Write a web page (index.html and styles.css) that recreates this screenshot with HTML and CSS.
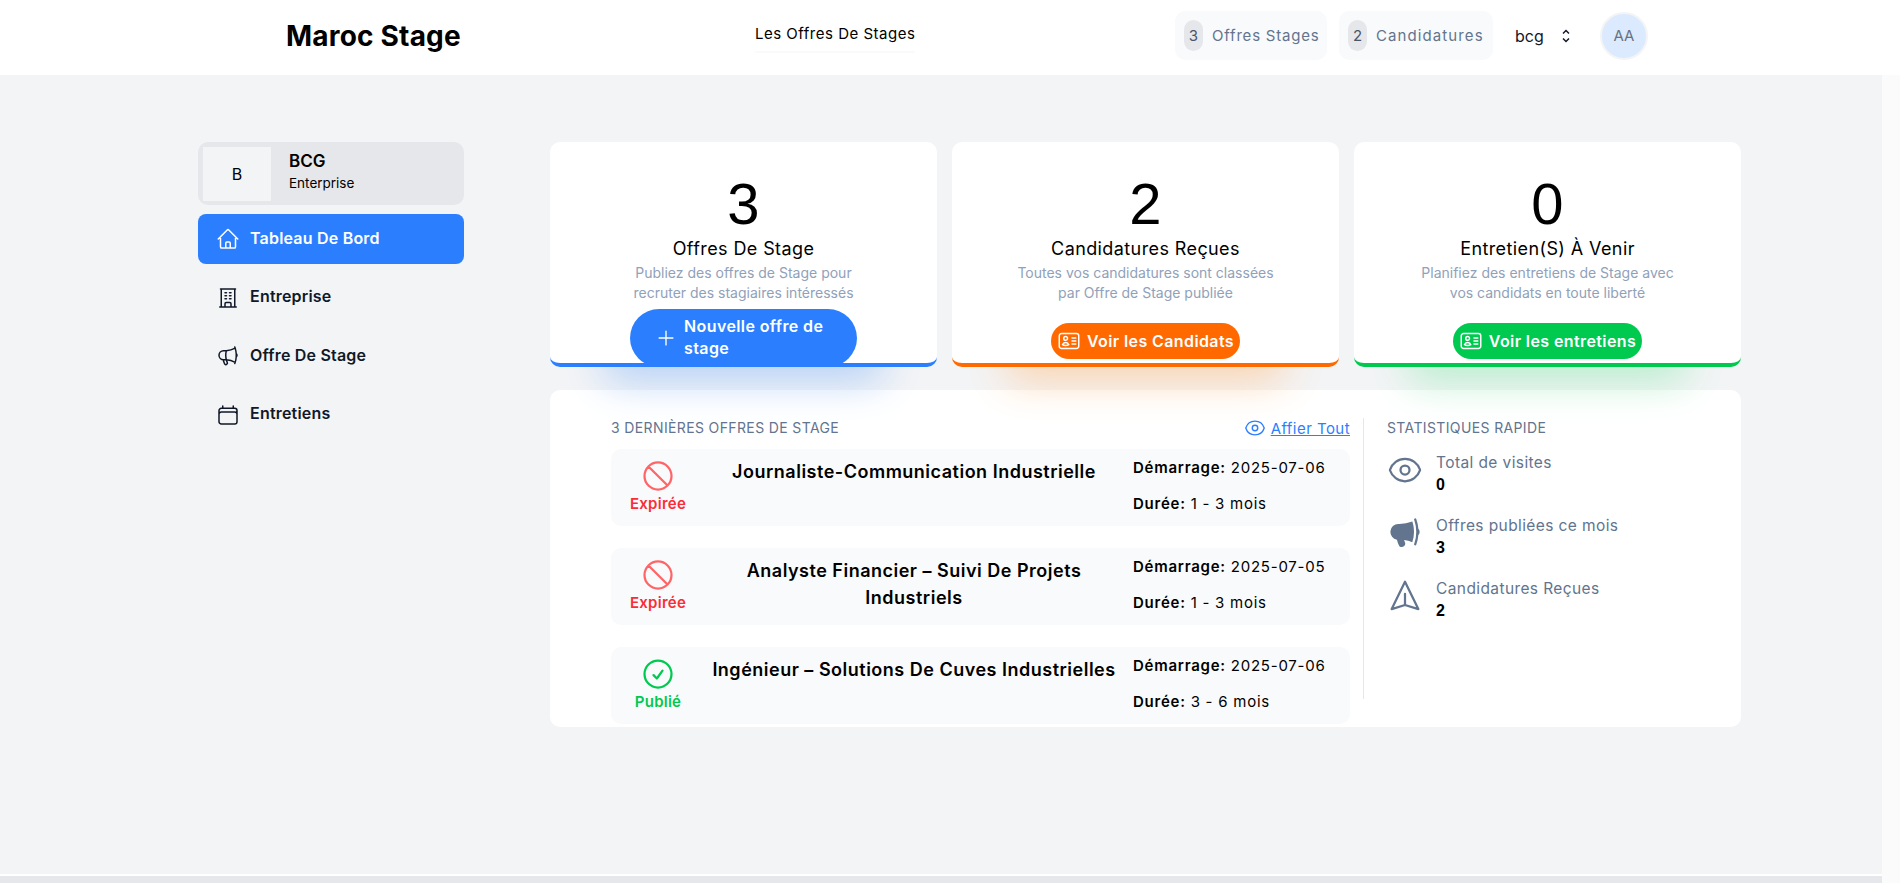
FILE: index.html
```html
<!DOCTYPE html>
<html lang="fr">

<head>
    <title>Maroc Stage</title>
    <meta charset="utf-8">
    <meta name="viewport" content="width=device-width, initial-scale=1">
    <link rel="stylesheet" href="styles.css">
</head>

<body>
    <header class="topbar">
        <div class="logo">Maroc Stage</div>
        <a class="nav_link">Les Offres De Stages</a>
        <div class="top_right">
            <div class="counter"><span class="badge">3</span>Offres Stages</div>
            <div class="counter"><span class="badge">2</span>Candidatures</div>
            <div class="company_select">
                <span>bcg</span>
                <svg class="chevrons" viewBox="0 0 10 18" fill="none" stroke="#111827" stroke-width="1.5">
                    <path d="M2 6.5 5 3.5l3 3M2 11.5l3 3 3-3" />
                </svg>
            </div>
            <div class="avatar">AA</div>
        </div>
    </header>

    <main class="layout">
        <aside class="sidebar">
            <div class="company">
                <div class="company_logo">B</div>
                <div class="company_info">
                    <div class="company_name">BCG</div>
                    <div class="company_type">Enterprise</div>
                </div>
            </div>
            <a class="menu_item active">
                <svg class="menu_icon" viewBox="0 0 24 24" fill="none" stroke="currentColor" stroke-width="1.5" stroke-linecap="round" stroke-linejoin="round">
                    <path d="m2.25 12 8.954-8.955c.44-.439 1.152-.439 1.591 0L21.75 12M4.5 9.75v10.125c0 .621.504 1.125 1.125 1.125H9.75v-4.875c0-.621.504-1.125 1.125-1.125h2.25c.621 0 1.125.504 1.125 1.125V21h4.125c.621 0 1.125-.504 1.125-1.125V9.75M8.25 21h8.25" />
                </svg>
                <span>Tableau De Bord</span>
            </a>
            <a class="menu_item">
                <svg class="menu_icon" viewBox="0 0 24 24" fill="none" stroke="currentColor" stroke-width="1.5" stroke-linecap="round" stroke-linejoin="round">
                    <path d="M3.75 21h16.5M4.5 3h15M5.25 3v18m13.5-18v18M9 6.75h1.5m-1.5 3h1.5m-1.5 3h1.5m3-6H15m-1.5 3H15m-1.5 3H15M9 21v-3.375c0-.621.504-1.125 1.125-1.125h3.75c.621 0 1.125.504 1.125 1.125V21" />
                </svg>
                <span>Entreprise</span>
            </a>
            <a class="menu_item">
                <svg class="menu_icon" viewBox="0 0 24 24" fill="none" stroke="currentColor" stroke-width="1.5" stroke-linecap="round" stroke-linejoin="round">
                    <path d="M10.34 15.84c-.688-.06-1.386-.09-2.09-.09H7.5a4.5 4.5 0 1 1 0-9h.75c.704 0 1.402-.03 2.09-.09m0 9.18c.253.962.584 1.892.985 2.783.247.55.06 1.21-.463 1.511l-.657.38c-.551.318-1.26.117-1.527-.461a20.845 20.845 0 0 1-1.44-4.282m3.102.069a18.03 18.03 0 0 1-.59-4.59c0-1.586.205-3.124.59-4.59m0 9.18a23.848 23.848 0 0 1 8.835 2.535M10.34 6.66a23.847 23.847 0 0 0 8.835-2.535m0 0A23.74 23.74 0 0 0 18.795 3m.38 1.125a23.91 23.91 0 0 1 1.014 5.395m-1.014 8.855c-.118.38-.245.754-.38 1.125m.38-1.125a23.91 23.91 0 0 0 1.014-5.395m0-3.46c.495.413.811 1.035.811 1.73 0 .695-.316 1.317-.811 1.73m0-3.46a24.347 24.347 0 0 1 0 3.46" />
                </svg>
                <span>Offre De Stage</span>
            </a>
            <a class="menu_item">
                <svg class="menu_icon" viewBox="0 0 24 24" fill="none" stroke="currentColor" stroke-width="1.5" stroke-linecap="round" stroke-linejoin="round">
                    <path d="M6.75 3v2.25M17.25 3v2.25M3 18.75V7.5a2.25 2.25 0 0 1 2.25-2.25h13.5A2.25 2.25 0 0 1 21 7.5v11.25m-18 0A2.25 2.25 0 0 0 5.25 21h13.5A2.25 2.25 0 0 0 21 18.75m-18 0v-7.5A2.25 2.25 0 0 1 5.25 9h13.5A2.25 2.25 0 0 1 21 11.25v7.5" />
                </svg>
                <span>Entretiens</span>
            </a>
        </aside>

        <section class="content">
            <div class="cards">
                <div class="card card_blue">
                    <div class="card_number">3</div>
                    <div class="card_title">Offres De Stage</div>
                    <p class="card_text">Publiez des offres de Stage pour<br>recruter des stagiaires intéressés</p>
                    <a class="btn btn_tall">
                        <svg class="btn_plus" viewBox="0 0 24 24" fill="none" stroke="currentColor" stroke-width="1.5" stroke-linecap="round">
                            <path d="M12 4.5v15m7.5-7.5h-15" />
                        </svg>
                        <span class="btn_label">Nouvelle offre de stage</span>
                    </a>
                </div>
                <div class="card card_orange">
                    <div class="card_number">2</div>
                    <div class="card_title">Candidatures Reçues</div>
                    <p class="card_text">Toutes vos candidatures sont classées<br>par Offre de Stage publiée</p>
                    <a class="btn">
                        <svg class="btn_icon" viewBox="0 0 24 24" fill="none" stroke="currentColor" stroke-width="1.5" stroke-linecap="round" stroke-linejoin="round">
                            <path d="M15 9h3.75M15 12h3.75M15 15h3.75M4.5 19.5h15a2.25 2.25 0 0 0 2.25-2.25V6.75A2.25 2.25 0 0 0 19.5 4.5h-15a2.25 2.25 0 0 0-2.25 2.25v10.5A2.25 2.25 0 0 0 4.5 19.5Zm6-10.125a1.875 1.875 0 1 1-3.75 0 1.875 1.875 0 0 1 3.75 0Zm1.294 6.336a6.721 6.721 0 0 1-3.17.789 6.721 6.721 0 0 1-3.168-.789 3.376 3.376 0 0 1 6.338 0Z" />
                        </svg>
                        Voir les Candidats
                    </a>
                </div>
                <div class="card card_green">
                    <div class="card_number">0</div>
                    <div class="card_title">Entretien(S) À Venir</div>
                    <p class="card_text">Planifiez des entretiens de Stage avec<br>vos candidats en toute liberté</p>
                    <a class="btn">
                        <svg class="btn_icon" viewBox="0 0 24 24" fill="none" stroke="currentColor" stroke-width="1.5" stroke-linecap="round" stroke-linejoin="round">
                            <path d="M15 9h3.75M15 12h3.75M15 15h3.75M4.5 19.5h15a2.25 2.25 0 0 0 2.25-2.25V6.75A2.25 2.25 0 0 0 19.5 4.5h-15a2.25 2.25 0 0 0-2.25 2.25v10.5A2.25 2.25 0 0 0 4.5 19.5Zm6-10.125a1.875 1.875 0 1 1-3.75 0 1.875 1.875 0 0 1 3.75 0Zm1.294 6.336a6.721 6.721 0 0 1-3.17.789 6.721 6.721 0 0 1-3.168-.789 3.376 3.376 0 0 1 6.338 0Z" />
                        </svg>
                        Voir les entretiens
                    </a>
                </div>
            </div>

            <div class="panel">
                <div class="offers">
                    <div class="offers_head">
                        <h2 class="section_title">3 dernières offres de stage</h2>
                        <a class="see_all">
                            <svg class="see_all_icon" viewBox="0 0 24 24" fill="none" stroke="currentColor" stroke-width="1.5" stroke-linecap="round" stroke-linejoin="round">
                                <path d="M2.036 12.322a1.012 1.012 0 0 1 0-.639C3.423 7.51 7.36 4.5 12 4.5c4.638 0 8.573 3.007 9.963 7.178.07.207.07.431 0 .639C20.577 16.49 16.64 19.5 12 19.5c-4.638 0-8.573-3.007-9.963-7.178Z" />
                                <path d="M15 12a3 3 0 1 1-6 0 3 3 0 0 1 6 0Z" />
                            </svg>
                            <span>Affier Tout</span>
                        </a>
                    </div>

                    <div class="offer">
                        <div class="status expired">
                            <svg class="status_icon" viewBox="0 0 24 24" fill="none" stroke="currentColor" stroke-width="1.5" stroke-linecap="round" stroke-linejoin="round">
                                <path d="M18.364 18.364A9 9 0 0 0 5.636 5.636m12.728 12.728A9 9 0 0 1 5.636 5.636m12.728 12.728L5.636 5.636" />
                            </svg>
                            <span>Expirée</span>
                        </div>
                        <div class="offer_title">Journaliste-Communication Industrielle</div>
                        <div class="offer_meta">
                            <div><b>Démarrage:</b> 2025-07-06</div>
                            <div><b>Durée:</b> 1 - 3 mois</div>
                        </div>
                    </div>

                    <div class="offer">
                        <div class="status expired">
                            <svg class="status_icon" viewBox="0 0 24 24" fill="none" stroke="currentColor" stroke-width="1.5" stroke-linecap="round" stroke-linejoin="round">
                                <path d="M18.364 18.364A9 9 0 0 0 5.636 5.636m12.728 12.728A9 9 0 0 1 5.636 5.636m12.728 12.728L5.636 5.636" />
                            </svg>
                            <span>Expirée</span>
                        </div>
                        <div class="offer_title">Analyste Financier – Suivi De Projets Industriels</div>
                        <div class="offer_meta">
                            <div><b>Démarrage:</b> 2025-07-05</div>
                            <div><b>Durée:</b> 1 - 3 mois</div>
                        </div>
                    </div>

                    <div class="offer">
                        <div class="status published">
                            <svg class="status_icon" viewBox="0 0 24 24" fill="none" stroke="currentColor" stroke-width="1.5" stroke-linecap="round" stroke-linejoin="round">
                                <path d="M9 12.75 11.25 15 15 9.75M21 12a9 9 0 1 1-18 0 9 9 0 0 1 18 0Z" />
                            </svg>
                            <span>Publié</span>
                        </div>
                        <div class="offer_title">Ingénieur – Solutions De Cuves Industrielles</div>
                        <div class="offer_meta">
                            <div><b>Démarrage:</b> 2025-07-06</div>
                            <div><b>Durée:</b> 3 - 6 mois</div>
                        </div>
                    </div>
                </div>

                <div class="stats">
                    <h2 class="section_title">Statistiques rapide</h2>
                    <div class="stat">
                        <svg class="stat_icon" viewBox="0 0 24 24" fill="none" stroke="currentColor" stroke-width="1.5" stroke-linecap="round" stroke-linejoin="round">
                            <path d="M2.036 12.322a1.012 1.012 0 0 1 0-.639C3.423 7.51 7.36 4.5 12 4.5c4.638 0 8.573 3.007 9.963 7.178.07.207.07.431 0 .639C20.577 16.49 16.64 19.5 12 19.5c-4.638 0-8.573-3.007-9.963-7.178Z" />
                            <path d="M15 12a3 3 0 1 1-6 0 3 3 0 0 1 6 0Z" />
                        </svg>
                        <div>
                            <div class="stat_label">Total de visites</div>
                            <div class="stat_value">0</div>
                        </div>
                    </div>
                    <div class="stat">
                        <svg class="stat_icon" viewBox="0 0 24 24" fill="currentColor">
                            <path d="M16.881 4.345A23.112 23.112 0 0 1 8.25 6H7.5a5.25 5.25 0 0 0-.88 10.427 21.593 21.593 0 0 0 1.378 3.94c.464 1.004 1.674 1.32 2.582.796l.657-.379c.88-.508 1.165-1.593.772-2.468a17.116 17.116 0 0 1-.628-1.607c1.918.258 3.76.75 5.5 1.446A21.727 21.727 0 0 0 18 11.25c0-2.414-.393-4.735-1.119-6.905ZM18.26 3.74a23.22 23.22 0 0 1 1.24 7.51 23.22 23.22 0 0 1-1.24 7.51c-.055.161-.111.322-.17.482a.75.75 0 1 0 1.409.516 24.555 24.555 0 0 0 1.415-6.43 2.992 2.992 0 0 0 .836-2.078c0-.807-.319-1.54-.836-2.078a24.65 24.65 0 0 0-1.415-6.43.75.75 0 1 0-1.409.516c.059.16.116.321.17.483Z" />
                        </svg>
                        <div>
                            <div class="stat_label">Offres publiées ce mois</div>
                            <div class="stat_value">3</div>
                        </div>
                    </div>
                    <div class="stat">
                        <svg class="stat_icon" viewBox="0 0 24 24" fill="none" stroke="currentColor" stroke-width="1.5" stroke-linecap="round" stroke-linejoin="round">
                            <path d="M12 6 20.875 3.269 12 21.485 3.125 3.27 12 5.999Zm0 0v7.5" transform="rotate(180 12 12)" />
                        </svg>
                        <div>
                            <div class="stat_label">Candidatures Reçues</div>
                            <div class="stat_value">2</div>
                        </div>
                    </div>
                </div>
            </div>
        </section>
    </main>

    <footer class="bottom_strip"></footer>
</body>

</html>
```

FILE: styles.css
```css
html,
body {
    height: 100%;
    margin: 0;
    overflow: hidden;
}

body {
    font-family: "Inter", "Liberation Sans", sans-serif;
    background-color: #FBFBFB;
    color: #000000;
}

/* top bar */
.topbar {
    display: flex;
    align-items: center;
    height: 75px;
    padding-left: 286px;
    background-color: #FFFFFF;
}

.logo {
    width: 469px;
    margin-bottom: 4px;
    font-size: 28px;
    font-weight: 700;
    letter-spacing: 0.2px;
}

.nav_link {
    width: 160px;
    padding-bottom: 8px;
    margin-top: 2px;
    border-bottom: 2px solid #F9FAFB;
    font-size: 15px;
    letter-spacing: 0.5px;
    text-align: center;
    white-space: nowrap;
}

.top_right {
    display: flex;
    align-items: center;
    margin-bottom: 4px;
    margin-left: 260px;
    gap: 12px;
}

.counter {
    display: flex;
    align-items: center;
    gap: 9px;
    width: 152px;
    height: 49px;
    box-sizing: border-box;
    padding-left: 9px;
    border-radius: 10px;
    background-color: #F9FAFB;
    color: #62748E;
    font-size: 15px;
    letter-spacing: 0.8px;
}

.counter + .counter {
    width: 154px;
    letter-spacing: 1.1px;
}

.badge {
    display: flex;
    align-items: center;
    justify-content: center;
    width: 19px;
    height: 31px;
    border-radius: 10px;
    background-color: #E5E7EB;
    color: #4A5565;
    letter-spacing: 0;
}

.company_select {
    display: flex;
    align-items: center;
    gap: 17px;
    width: 73px;
    margin-left: 10px;
    font-size: 16px;
    color: #111827;
}

.chevrons {
    width: 10px;
    height: 18px;
}

.avatar {
    display: flex;
    align-items: center;
    justify-content: center;
    box-sizing: border-box;
    width: 48px;
    height: 48px;
    border: 2px solid #F3F4F6;
    border-radius: 50%;
    background-color: #DBEAFE;
    color: #6A7282;
    font-size: 15px;
}

/* page body */
.layout {
    display: flex;
    align-items: flex-start;
    width: 1882px;
    height: 799px;
    box-sizing: border-box;
    padding: 67px 0 0 198px;
    gap: 86px;
    background-color: #F3F4F6;
}

.sidebar {
    width: 266px;
    flex-shrink: 0;
}

.company {
    display: flex;
    align-items: center;
    gap: 18px;
    height: 63px;
    box-sizing: border-box;
    padding-left: 5px;
    margin-bottom: 9px;
    border-radius: 10px;
    background-color: #E5E7EB;
}

.company_logo {
    display: flex;
    align-items: center;
    justify-content: center;
    width: 68px;
    height: 54px;
    background-color: #F3F4F6;
    font-size: 16px;
}

.company_info {
    margin-bottom: 6px;
}

.company_name {
    font-size: 17px;
    font-weight: 600;
    line-height: 24px;
}

.company_type {
    font-size: 13.5px;
    line-height: 20px;
}

.menu_item {
    display: flex;
    align-items: center;
    gap: 10px;
    height: 50px;
    padding-left: 18px;
    margin-bottom: 8.6px;
    border-radius: 8px;
    color: #101828;
    font-size: 16px;
    font-weight: 600;
    letter-spacing: 0.2px;
}

.menu_item span {
    margin-bottom: 3px;
}

.menu_item.active {
    background-color: #2B7FFF;
    color: #FFFFFF;
}

.menu_icon {
    width: 24px;
    height: 24px;
}

.content {
    width: 1191px;
}

.cards {
    display: grid;
    grid-template-columns: repeat(3, 1fr);
    gap: 15px;
    margin-bottom: 23px;
}

.card {
    display: flex;
    flex-direction: column;
    align-items: center;
    box-sizing: border-box;
    height: 225px;
    padding-top: 32px;
    border-bottom: 4px solid;
    border-radius: 10px;
    background-color: #FFFFFF;
    overflow: hidden;
    text-align: center;
}

.card_blue {
    border-color: #2B7FFF;
    box-shadow: 0 68px 42px -55px #B4D0F7;
}

.card_orange {
    border-color: #FF6900;
    box-shadow: 0 68px 42px -55px #FBD3AE;
}

.card_green {
    border-color: #00C950;
    box-shadow: 0 68px 42px -55px #B6EDCB;
}

.card_number {
    font-family: "Liberation Sans", sans-serif;
    font-size: 58px;
    line-height: 60px;
}

.card_title {
    margin-top: 1px;
    font-size: 18px;
    letter-spacing: 0.4px;
    line-height: 28px;
}

.card_text {
    margin: 0;
    color: #90A1B9;
    font-size: 14px;
    line-height: 20px;
}

.btn {
    display: flex;
    align-items: center;
    gap: 6px;
    height: 36px;
    box-sizing: border-box;
    padding: 0 6px;
    margin-top: 20px;
    border-radius: 18px;
    color: #FFFFFF;
    font-size: 16px;
    font-weight: 600;
    letter-spacing: 0.4px;
    white-space: nowrap;
}

.card_orange .btn {
    background-color: #FF6900;
}

.card_green .btn {
    background-color: #00C950;
}

.btn_icon {
    width: 24px;
    height: 24px;
}

.btn_tall {
    width: 227px;
    height: 58px;
    flex-shrink: 0;
    padding: 0 28px 0 25px;
    margin-top: 6px;
    gap: 7px;
    border-radius: 29px;
    background-color: #2B7FFF;
    line-height: 22px;
    text-align: left;
    white-space: normal;
}

.btn_label {
    margin-bottom: 2px;
}

.btn_plus {
    width: 22px;
    height: 22px;
    flex-shrink: 0;
}

/* last offers + stats */
.panel {
    display: flex;
    align-items: flex-start;
    box-sizing: border-box;
    height: 337px;
    padding: 28px 0 0 61px;
    border-radius: 10px;
    background-color: #FFFFFF;
}

.offers {
    width: 739px;
    flex-shrink: 0;
    margin-right: 13px;
}

.offers_head {
    display: flex;
    align-items: center;
    justify-content: space-between;
    height: 20px;
    margin-bottom: 11px;
}

.section_title {
    margin: 0;
    color: #62748E;
    font-size: 14px;
    font-weight: 400;
    letter-spacing: 0.37px;
    line-height: 20px;
    text-transform: uppercase;
}

.see_all {
    display: flex;
    align-items: center;
    gap: 5px;
    color: #2B7FFF;
    font-size: 15px;
    letter-spacing: 0.45px;
}

.see_all span {
    text-decoration: underline;
}

.see_all_icon {
    width: 22px;
    height: 22px;
}

.offer {
    display: flex;
    box-sizing: border-box;
    height: 77px;
    margin-bottom: 22px;
    border-radius: 10px;
    background-color: #F9FAFB;
}

.status {
    display: flex;
    flex-direction: column;
    align-items: center;
    width: 94px;
    flex-shrink: 0;
    padding-top: 9px;
    font-size: 15px;
    font-weight: 600;
    letter-spacing: 0.25px;
    line-height: 20px;
}

.status_icon {
    width: 36px;
    height: 36px;
}

.expired {
    color: #FB2C36;
}

.expired .status_icon {
    color: #FF6467;
}

.published {
    color: #00C950;
}

.offer_title {
    width: 418px;
    flex-shrink: 0;
    padding-top: 9px;
    font-size: 18px;
    font-weight: 600;
    letter-spacing: 0.5px;
    line-height: 27px;
    text-align: center;
}

.offer_meta {
    padding: 1px 0 0 10px;
    font-size: 15px;
    letter-spacing: 0.75px;
    line-height: 36px;
    white-space: nowrap;
}

.offer_meta b {
    font-weight: 600;
}

.stats {
    box-sizing: border-box;
    width: 300px;
    height: 281px;
    padding-left: 23px;
    border-left: 1px solid #E5E7EB;
}

.stats .section_title {
    margin-bottom: 14px;
}

.stat {
    display: flex;
    gap: 13px;
    height: 44px;
    margin-bottom: 19px;
}

.stat_icon {
    width: 36px;
    height: 36px;
    color: #62748E;
}

.stat_label {
    color: #62748E;
    font-size: 15.5px;
    letter-spacing: 0.4px;
    line-height: 22px;
}

.stat_value {
    font-family: "Liberation Sans", sans-serif;
    font-size: 16px;
    font-weight: 700;
    line-height: 22px;
}

.bottom_strip {
    width: 1882px;
    height: 9px;
    box-sizing: border-box;
    border-top: 2px solid #FFFFFF;
    background-color: #E5E7EB;
}
```
